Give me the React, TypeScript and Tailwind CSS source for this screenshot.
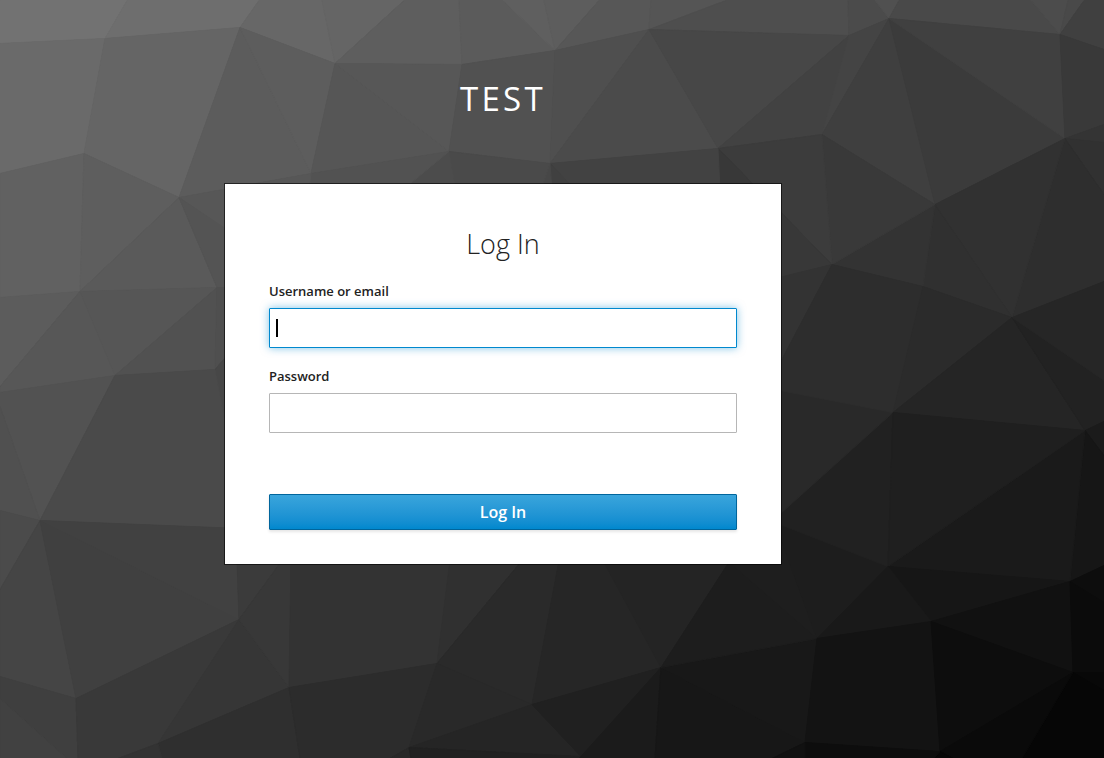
import { useState } from 'react';
import type { FormEvent } from 'react';

// Low-poly backdrop: [fill, points]
const FACES: [string, string][] = [
  ['#727272', '0,0 127,0 105,38 0,43'],
  ['#6e6e6e', '127,0 259,0 240,27 105,38'],
  ['#6a6a6a', '0,43 105,38 84,153 0,173'],
  ['#656565', '105,38 240,27 179,197 84,153'],
  ['#676767', '259,0 322,0 335,63 240,27'],
  ['#656565', '322,0 404,0 335,63'],
  ['#5e5e5e', '404,0 459,0 462,64 335,63'],
  ['#5b5b5b', '459,0 503,0 555,50 462,64'],
  ['#5f5f5f', '503,0 544,0 555,50'],
  ['#5d5d5d', '544,0 599,0 555,50'],
  ['#575757', '599,0 651,0 649,29 555,50'],
  ['#555555', '651,0 726,0 649,29'],
  ['#4e4e4e', '726,0 848,0 849,35 649,29'],
  ['#4b4b4b', '848,0 875,0 889,18 849,35'],
  ['#505050', '875,0 899,0 889,18'],
  ['#494949', '899,0 1031,0 1060,34 889,18'],
  ['#4c4c4c', '1031,0 1068,0 1060,34'],
  ['#494949', '1068,0 1084,0 1060,34'],
  ['#404040', '1084,0 1104,0 1104,49 1060,34'],
  ['#5c5c5c', '240,27 311,173 179,197'],
  ['#5d5d5d', '240,27 335,63 311,173'],
  ['#565656', '335,63 449,151 311,173'],
  ['#575757', '335,63 462,64 449,151'],
  ['#515151', '462,64 555,50 550,163 449,151'],
  ['#4f4f4f', '555,50 649,29 550,163'],
  ['#4b4b4b', '649,29 718,148 550,163'],
  ['#474747', '649,29 849,35 718,148'],
  ['#424242', '849,35 822,134 718,148'],
  ['#444444', '849,35 889,18 822,134'],
  ['#3f3f3f', '889,18 935,204 822,134'],
  ['#3b3b3b', '889,18 1065,138 935,204'],
  ['#404040', '889,18 1060,34 1065,138'],
  ['#393939', '1060,34 1104,49 1104,124 1065,138'],
  ['#343434', '1065,138 1104,124 1104,142'],
  ['#313131', '1065,138 1104,142 1104,194'],
  ['#2e2e2e', '1065,138 1104,194 1104,281 1012,317'],
  ['#313131', '935,204 1065,138 1012,317'],
  ['#303030', '935,204 1012,317 923,286'],
  ['#333333', '935,204 923,286 832,264'],
  ['#393939', '822,134 935,204 832,264'],
  ['#3c3c3c', '718,148 822,134 832,264'],
  ['#383838', '718,148 832,264 700,300'],
  ['#424242', '550,163 718,148 720,190 576,190'],
  ['#404040', '550,163 576,190 552,190'],
  ['#474747', '550,163 552,190 541,190'],
  ['#4a4a4a', '449,151 550,163 541,190 456,190'],
  ['#4c4c4c', '449,151 456,190 402,190'],
  ['#525252', '311,173 449,151 402,190 309,190'],
  ['#575757', '179,197 311,173 309,190 240,240'],
  ['#616161', '84,153 80,291 0,297 0,173'],
  ['#5e5e5e', '84,153 179,197 80,291'],
  ['#5a5a5a', '179,197 217,287 80,291'],
  ['#545454', '179,197 240,238 240,290 217,287'],
  ['#5c5c5c', '0,297 80,291 0,386'],
  ['#575757', '80,291 115,375 0,392 0,386'],
  ['#565656', '80,291 217,287 115,375'],
  ['#515151', '217,287 215,369 115,375'],
  ['#4f4f4f', '217,287 240,287 240,340 215,369'],
  ['#474747', '215,369 240,340 240,500'],
  ['#525252', '115,375 40,520 0,406 0,392'],
  ['#505050', '0,406 40,520 0,510'],
  ['#4a4a4a', '115,375 215,369 240,500 240,528 40,520'],
  ['#4b4b4b', '0,510 40,520 0,589'],
  ['#454545', '40,520 76,698 0,676 0,589'],
  ['#404040', '40,520 239,619 76,698'],
  ['#414141', '40,520 240,528 237,570 239,619'],
  ['#3f3f3f', '0,676 76,698 78,758 67,758 0,698'],
  ['#414141', '0,698 67,758 0,758'],
  ['#393939', '76,698 239,619 158,743 118,758 78,758'],
  ['#363636', '239,619 289,687 158,743'],
  ['#3b3b3b', '237,560 282,560 239,619'],
  ['#383838', '282,560 291,560 289,687 239,619'],
  ['#333333', '291,560 450,560 437,663 289,687'],
  ['#2f2f2f', '289,687 300,758 162,758 158,743'],
  ['#333333', '158,743 162,758 118,758'],
  ['#2c2c2c', '289,687 437,663 409,747 390,758 300,758'],
  ['#303030', '450,560 522,560 437,663'],
  ['#2a2a2a', '522,560 559,560 532,704 437,663'],
  ['#292929', '437,663 532,704 409,747'],
  ['#262626', '559,560 603,560 661,667 532,704'],
  ['#242424', '603,560 730,560 661,667'],
  ['#282828', '409,747 411,758 390,758'],
  ['#252525', '409,747 532,704 581,756'],
  ['#212121', '409,747 581,756 579,758 411,758'],
  ['#202020', '532,704 661,667 581,756'],
  ['#1b1b1b', '661,667 655,758 579,758 581,756'],
  ['#171717', '661,667 805,742 772,758 655,758'],
  ['#181818', '661,667 817,638 805,742'],
  ['#1d1d1d', '730,560 817,638 661,667'],
  ['#1e1e1e', '727,560 775,520 817,638'],
  ['#1d1d1d', '775,522 888,566 817,638'],
  ['#212121', '893,412 888,566 775,522 775,517'],
  ['#292929', '775,389 893,412 775,518'],
  ['#333333', '832,264 775,372 775,278'],
  ['#2d2d2d', '832,264 923,286 893,412 775,389 775,372'],
  ['#2b2b2b', '923,286 1012,317 893,412'],
  ['#252525', '1012,317 1085,430 893,412'],
  ['#222222', '1012,317 1104,380 1104,421 1085,430'],
  ['#262626', '1012,317 1104,281 1104,380'],
  ['#1b1b1b', '1085,430 1104,421 1104,455'],
  ['#161616', '1085,430 1104,455 1104,565 1070,581'],
  ['#1a1a1a', '1085,430 1070,581 888,566'],
  ['#1f1f1f', '893,412 1085,430 888,566'],
  ['#161616', '888,566 1070,581 931,621'],
  ['#191919', '888,566 931,621 817,638'],
  ['#131313', '817,638 931,621 940,751 805,742'],
  ['#111111', '931,621 1070,581 1073,672'],
  ['#0d0d0d', '931,621 1073,672 940,751'],
  ['#0d0d0d', '1070,581 1104,565 1104,602'],
  ['#0b0b0b', '1070,581 1104,602 1104,672 1073,672'],
  ['#080808', '1073,672 1104,672 1104,690'],
  ['#060606', '1073,672 1104,690 1104,758 1022,758'],
  ['#0a0a0a', '1073,672 1022,758 953,758 940,751'],
  ['#070707', '940,751 953,758 934,758'],
  ['#0d0d0d', '805,742 940,751 934,758 805,758'],
  ['#111111', '805,742 805,758 772,758'],
];

function Backdrop() {
  return (
    <svg
      className="absolute inset-0 -z-10 h-full w-full"
      viewBox="0 0 1104 758"
      preserveAspectRatio="xMidYMid slice"
      aria-hidden="true"
    >
      <g transform="translate(0 0.5)">
        {FACES.map(([fill, points]) => (
          <polygon key={points} points={points} fill={fill} stroke={fill} strokeWidth={1} />
        ))}
      </g>
    </svg>
  );
}

type FieldProps = {
  id: string;
  label: string;
  type: string;
  value: string;
  autoFocus?: boolean;
  onChange: (value: string) => void;
};

function Field({ id, label, type, value, autoFocus, onChange }: FieldProps) {
  return (
    <div className="flex flex-col gap-[7px]">
      <label htmlFor={id} className="text-[13px] leading-5 font-semibold text-[#222]">
        {label}
      </label>
      <div className="relative">
        <input
          id={id}
          type={type}
          value={value}
          autoFocus={autoFocus}
          onChange={(e) => onChange(e.target.value)}
          className="peer block h-10 w-full rounded-[1px] border border-[#b6b6b6] bg-white px-1.5 text-sm text-[#222] outline-none placeholder-shown:caret-transparent focus:border-[#0088ce] focus:shadow-[0_0_8px_rgba(0,136,206,0.5)]"
          placeholder=" "
        />
        {/* thick caret while the field is still empty */}
        <span className="pointer-events-none absolute top-[11px] left-[7px] hidden h-[18px] w-0.5 bg-black peer-focus:peer-placeholder-shown:block" />
      </div>
    </div>
  );
}

export default function App() {
  const [username, setUsername] = useState('');
  const [password, setPassword] = useState('');

  function handleSubmit(e: FormEvent) {
    e.preventDefault();
  }

  return (
    <div className="relative isolate flex min-h-screen flex-col items-center overflow-hidden bg-[#222] pr-[98px] font-['Open_Sans',sans-serif]">
      <Backdrop />
      <header className="pt-[74px] pb-[60px]">
        <h1 className="text-[33px] leading-[50px] tracking-widest text-white uppercase">Test</h1>
      </header>
      <main className="w-full max-w-[556px] bg-white px-11 pt-11 pb-[34px] shadow-[0_0_0_1px_rgba(0,0,0,0.6)]">
        <h2 className="text-center text-[27px] leading-8 font-light text-[#222]">Log In</h2>
        <form onSubmit={handleSubmit} className="flex flex-col gap-[18px] pt-[21px]">
          <Field
            id="username"
            label="Username or email"
            type="text"
            value={username}
            autoFocus
            onChange={setUsername}
          />
          <Field
            id="password"
            label="Password"
            type="password"
            value={password}
            onChange={setPassword}
          />
          <button
            type="submit"
            className="mt-[43px] h-9 w-full rounded-[1px] border border-[#00659c] bg-linear-to-b from-[#39a5dc] to-[#0088ce] text-base leading-6 font-semibold text-white shadow-[0_2px_3px_rgba(3,3,3,0.1)]"
          >
            Log In
          </button>
        </form>
      </main>
    </div>
  );
}
